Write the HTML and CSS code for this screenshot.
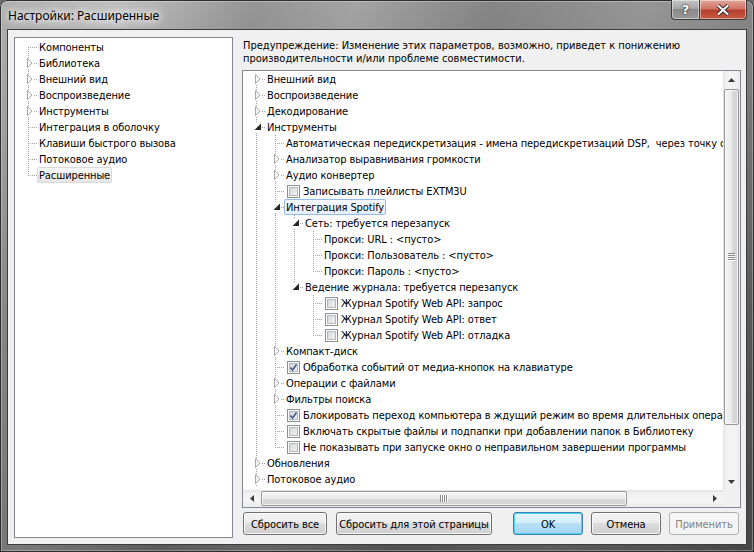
FILE: index.html
```html
<!DOCTYPE html>
<html>
<head>
    <title>Настройки: Расширенные</title>
    <meta charset="UTF-8">
    <link rel="stylesheet" href="styles.css">
</head>
<body>
<svg class="sprite" width="0" height="0">
    <symbol id="tri-c" viewBox="0 0 19 16">
        <rect x="8" y="3" width="8" height="11" fill="#fff"/>
        <path d="M9.5 3.5 L14 8 L9.5 12.5 Z" fill="#fff" stroke="#a6a6a6"/>
    </symbol>
    <symbol id="tri-e" viewBox="0 0 19 16">
        <rect x="8" y="3" width="8" height="10" fill="#fff"/>
        <path d="M15 4.5 V11 H8.5 Z" fill="#262626"/>
    </symbol>
    <symbol id="tick" viewBox="0 0 11 11">
        <path d="M2.5 5.5 L4.5 8 L8.5 2.5" fill="none" stroke="#4a6093" stroke-width="1.7"/>
    </symbol>
</svg>

<div class="window">
    <div class="titlebar">
        <span class="title">Настройки: Расширенные</span>
        <div class="caption">
            <div class="cap help">?</div>
            <div class="cap close">
                <svg width="16" height="12" viewBox="0 0 16 12">
                    <path d="M3 1.5 L13 10.5 M13 1.5 L3 10.5" stroke="#3a2a2a" stroke-width="4"/>
                    <path d="M3 1.5 L13 10.5 M13 1.5 L3 10.5" stroke="#fff" stroke-width="2"/>
                </svg>
            </div>
        </div>
    </div>

    <div class="client">
        <!-- page list -->
        <div class="nav tree">
            <div class="row"><span class="c first"></span><span class="lbl">Компоненты</span></div>
            <div class="row"><span class="c mid"><svg class="ico"><use href="#tri-c"/></svg></span><span class="lbl">Библиотека</span></div>
            <div class="row"><span class="c mid"><svg class="ico"><use href="#tri-c"/></svg></span><span class="lbl">Внешний вид</span></div>
            <div class="row"><span class="c mid"><svg class="ico"><use href="#tri-c"/></svg></span><span class="lbl">Воспроизведение</span></div>
            <div class="row"><span class="c mid"><svg class="ico"><use href="#tri-c"/></svg></span><span class="lbl">Инструменты</span></div>
            <div class="row"><span class="c mid"></span><span class="lbl">Интеграция в оболочку</span></div>
            <div class="row"><span class="c mid"></span><span class="lbl">Клавиши быстрого вызова</span></div>
            <div class="row"><span class="c mid"></span><span class="lbl">Потоковое аудио</span></div>
            <div class="row"><span class="c last"></span><span class="lbl sel-gray">Расширенные</span></div>
        </div>

        <div class="page">
            <p class="warn">Предупреждение: Изменение этих параметров, возможно, приведет к понижению<br>производительности и/или проблеме совместимости.</p>

            <div class="adv">
                <div class="viewport tree">
                    <div class="row"><span class="c first"><svg class="ico"><use href="#tri-c"/></svg></span><span class="lbl">Внешний вид</span></div>
                    <div class="row"><span class="c mid"><svg class="ico"><use href="#tri-c"/></svg></span><span class="lbl">Воспроизведение</span></div>
                    <div class="row"><span class="c mid"><svg class="ico"><use href="#tri-c"/></svg></span><span class="lbl">Декодирование</span></div>
                    <div class="row"><span class="c mid"><svg class="ico"><use href="#tri-e"/></svg></span><span class="lbl">Инструменты</span></div>

                    <div class="row"><span class="g v"></span><span class="c mid"></span><span class="lbl">Автоматическая передискретизация - имена передискретизаций DSP,&nbsp; через точку с запятой</span></div>
                    <div class="row"><span class="g v"></span><span class="c mid"><svg class="ico"><use href="#tri-c"/></svg></span><span class="lbl">Анализатор выравнивания громкости</span></div>
                    <div class="row"><span class="g v"></span><span class="c mid"><svg class="ico"><use href="#tri-c"/></svg></span><span class="lbl">Аудио конвертер</span></div>
                    <div class="row"><span class="g v"></span><span class="c mid"></span><span class="cb"></span><span class="lbl">Записывать плейлисты EXTM3U</span></div>
                    <div class="row"><span class="g v"></span><span class="c mid"><svg class="ico"><use href="#tri-e"/></svg></span><span class="lbl sel">Интеграция Spotify</span></div>

                    <div class="row"><span class="g v"></span><span class="g v"></span><span class="c mid"><svg class="ico"><use href="#tri-e"/></svg></span><span class="lbl">Сеть: требуется перезапуск</span></div>
                    <div class="row"><span class="g v"></span><span class="g v"></span><span class="g v"></span><span class="c mid"></span><span class="lbl">Прокси: URL : &lt;пусто&gt;</span></div>
                    <div class="row"><span class="g v"></span><span class="g v"></span><span class="g v"></span><span class="c mid"></span><span class="lbl">Прокси: Пользователь : &lt;пусто&gt;</span></div>
                    <div class="row"><span class="g v"></span><span class="g v"></span><span class="g v"></span><span class="c last"></span><span class="lbl">Прокси: Пароль : &lt;пусто&gt;</span></div>
                    <div class="row"><span class="g v"></span><span class="g v"></span><span class="c last"><svg class="ico"><use href="#tri-e"/></svg></span><span class="lbl">Ведение журнала: требуется перезапуск</span></div>
                    <div class="row"><span class="g v"></span><span class="g v"></span><span class="g"></span><span class="c mid"></span><span class="cb"></span><span class="lbl">Журнал Spotify Web API: запрос</span></div>
                    <div class="row"><span class="g v"></span><span class="g v"></span><span class="g"></span><span class="c mid"></span><span class="cb"></span><span class="lbl">Журнал Spotify Web API: ответ</span></div>
                    <div class="row"><span class="g v"></span><span class="g v"></span><span class="g"></span><span class="c last"></span><span class="cb"></span><span class="lbl">Журнал Spotify Web API: отладка</span></div>

                    <div class="row"><span class="g v"></span><span class="c mid"><svg class="ico"><use href="#tri-c"/></svg></span><span class="lbl">Компакт-диск</span></div>
                    <div class="row"><span class="g v"></span><span class="c mid"></span><span class="cb"><svg class="tick"><use href="#tick"/></svg></span><span class="lbl">Обработка событий от медиа-кнопок на клавиатуре</span></div>
                    <div class="row"><span class="g v"></span><span class="c mid"><svg class="ico"><use href="#tri-c"/></svg></span><span class="lbl">Операции с файлами</span></div>
                    <div class="row"><span class="g v"></span><span class="c mid"><svg class="ico"><use href="#tri-c"/></svg></span><span class="lbl">Фильтры поиска</span></div>
                    <div class="row"><span class="g v"></span><span class="c mid"></span><span class="cb"><svg class="tick"><use href="#tick"/></svg></span><span class="lbl">Блокировать переход компьютера в ждущий режим во время длительных операций</span></div>
                    <div class="row"><span class="g v"></span><span class="c mid"></span><span class="cb"></span><span class="lbl">Включать скрытые файлы и подпапки при добавлении папок в Библиотеку</span></div>
                    <div class="row"><span class="g v"></span><span class="c last"></span><span class="cb"></span><span class="lbl">Не показывать при запуске окно о неправильном завершении программы</span></div>

                    <div class="row"><span class="c mid"><svg class="ico"><use href="#tri-c"/></svg></span><span class="lbl">Обновления</span></div>
                    <div class="row"><span class="c mid"><svg class="ico"><use href="#tri-c"/></svg></span><span class="lbl">Потоковое аудио</span></div>
                </div>

                <div class="vscroll">
                    <div class="sb-btn"><svg width="7" height="4"><path d="M3.5 0 L7 4 H0 Z" fill="#3c3c3c"/></svg></div>
                    <div class="thumb v-thumb">
                        <svg width="8" height="8"><path d="M0 1.5h7M0 3.5h7M0 5.5h7M0 7.5h7" stroke="#fff"/><path d="M0 0.5h7M0 2.5h7M0 4.5h7M0 6.5h7" stroke="#8a8a8a"/></svg>
                    </div>
                    <div class="track"></div>
                    <div class="sb-btn"><svg width="7" height="4"><path d="M0 0 H7 L3.5 4 Z" fill="#3c3c3c"/></svg></div>
                </div>
                <div class="hscroll">
                    <div class="sb-btn"><svg width="4" height="7"><path d="M4 0 V7 L0 3.5 Z" fill="#3c3c3c"/></svg></div>
                    <div class="thumb h-thumb">
                        <svg width="8" height="8"><path d="M1.5 0v7M3.5 0v7M5.5 0v7M7.5 0v7" stroke="#fff"/><path d="M0.5 0v7M2.5 0v7M4.5 0v7M6.5 0v7" stroke="#8a8a8a"/></svg>
                    </div>
                    <div class="track"></div>
                    <div class="sb-btn"><svg width="4" height="7"><path d="M0 0 L4 3.5 L0 7 Z" fill="#3c3c3c"/></svg></div>
                </div>
                <div class="corner"></div>
            </div>

            <div class="buttons">
                <div class="btn reset-all">Сбросить все</div>
                <div class="btn reset-page">Сбросить для этой страницы</div>
                <div class="btn ok">OK</div>
                <div class="btn">Отмена</div>
                <div class="btn disabled">Применить</div>
            </div>
        </div>
    </div>
</div>
</body>
</html>
```

FILE: styles.css
```css
body {
    margin: 0;
    background: #6b6b6b;
    font-family: "DejaVu Sans Condensed", "Liberation Sans", sans-serif;
    font-size: 11px;
    color: #000;
    overflow: hidden;
}

.sprite {
    display: block;
    width: 0;
    height: 0;
}

/* window frame */
.window {
    width: 754px;
    height: 552px;
    box-sizing: border-box;
    padding: 0 7px 7px;
    display: flex;
    flex-direction: column;
    border-radius: 7px 7px 0 0;
    background:
        linear-gradient(to bottom, rgba(255, 255, 255, 0.08), rgba(0, 0, 0, 0.25) 60%, rgba(0, 0, 0, 0.35)),
        linear-gradient(100deg, #a9a9a9 0%, #b9b9b9 14%, #8c8c8c 30%, #9c9c9c 42%, #7b7b7b 58%, #8e8e8e 76%, #6c6c6c 100%);
    box-shadow: inset 0 0 0 1px #2e2e2e, inset 0 0 0 2px rgba(255, 255, 255, 0.3);
}

.titlebar {
    height: 29px;
    display: flex;
    justify-content: space-between;
    align-items: flex-start;
}

.title {
    font-family: "Noto Sans", "Open Sans", sans-serif;
    font-size: 12px;
    padding: 7px 0 0 1px;
    color: #000;
    text-shadow: 0 0 6px #fff, 0 0 10px #fff, 0 0 16px rgba(255, 255, 255, 0.9);
}

.caption {
    display: flex;
}

.cap {
    height: 19px;
    display: flex;
    align-items: center;
    justify-content: center;
    border: 1px solid #3a3a3a;
    border-top: none;
    box-shadow: inset 0 0 0 1px rgba(255, 255, 255, 0.45);
}

.help {
    width: 27px;
    border-radius: 0 0 0 4px;
    background: linear-gradient(#c4c4c4, #a2a2a2 50%, #8a8a8a 50%, #9a9a9a);
    color: #fff;
    font-family: "DejaVu Sans", sans-serif;
    font-weight: bold;
    font-size: 13px;
    text-shadow: 0 0 1px #222, 0 0 2px #222;
}

.close {
    width: 46px;
    border-left: none;
    border-radius: 0 0 4px 0;
    background: linear-gradient(#e2a79c, #d07566 45%, #b8402f 55%, #c65a45);
}

.client {
    flex: 1;
    display: flex;
    gap: 9px;
    padding: 7px 5px 6px 6px;
    background: #f0f0f0;
    border: 1px solid #3c3c3c;
    min-height: 0;
}

/* trees */
.tree {
    background: #fff;
    letter-spacing: -0.1px;
}

.nav {
    width: 219px;
    box-sizing: border-box;
    border: 1px solid #828790;
    padding: 1px 0 0 3px;
}

.row {
    display: flex;
    align-items: center;
    height: 16px;
    white-space: nowrap;
}

.g,
.c {
    flex: none;
    width: 19px;
    height: 16px;
    background-repeat: no-repeat;
}

.g.v {
    background-image: repeating-linear-gradient(to bottom, #a0a0a0 0 1px, transparent 1px 2px);
    background-size: 1px 16px;
    background-position: 10px 0;
}

.c.mid,
.c.last,
.c.first {
    background-image:
        repeating-linear-gradient(to bottom, #a0a0a0 0 1px, transparent 1px 2px),
        repeating-linear-gradient(to right, #a0a0a0 0 1px, transparent 1px 2px);
    background-size: 1px 16px, 9px 1px;
    background-position: 10px 0, 10px 8px;
}

.c.last {
    background-size: 1px 9px, 9px 1px;
}

.c.first {
    background-size: 1px 8px, 9px 1px;
    background-position: 10px 8px, 10px 8px;
}

.ico {
    display: block;
    width: 19px;
    height: 16px;
}

.lbl {
    flex: none;
    height: 16px;
    box-sizing: border-box;
    line-height: 13px;
    padding: 1px 1px 0;
    border: 1px solid transparent;
    border-radius: 2px;
}

.lbl.sel {
    border-color: #92bbe8;
    background: linear-gradient(#f5faff, #e3eefb);
}

.lbl.sel-gray {
    border-color: #d9d9d9;
    background: linear-gradient(#f8f8f8, #e6e6e6);
}

.cb {
    flex: none;
    width: 13px;
    height: 13px;
    box-sizing: border-box;
    margin: 0 1px 0 3px;
    border: 1px solid #8e8f8f;
    background: linear-gradient(135deg, #cdd1d6, #f7f7f7);
    box-shadow: inset 0 0 0 1px #fff, inset 0 0 0 2px #b5b9be;
}

.tick {
    display: block;
    width: 11px;
    height: 11px;
}

/* right page */
.page {
    flex: 1;
    display: flex;
    flex-direction: column;
    min-width: 0;
}

.warn {
    margin: 1px 0 6px 1px;
    padding-top: 1px;
    height: 25px;
    line-height: 13px;
}

.adv {
    flex: 1;
    min-height: 0;
    display: grid;
    grid-template-columns: 1fr 17px;
    grid-template-rows: 1fr 17px;
    border: 1px solid #828790;
    background: #fff;
}

.viewport {
    overflow: hidden;
    padding-left: 3px;
}

/* scrollbars */
.vscroll,
.hscroll {
    display: flex;
    background: linear-gradient(to right, #e2e2e2, #f1f1f1 3px, #f4f4f4 60%, #ececec);
}

.vscroll {
    flex-direction: column;
}

.hscroll {
    background: linear-gradient(to bottom, #e2e2e2, #f1f1f1 3px, #f4f4f4 60%, #ececec);
}

.sb-btn {
    flex: none;
    width: 17px;
    height: 17px;
    display: flex;
    align-items: center;
    justify-content: center;
}

.track {
    flex: 1;
}

.thumb {
    flex: none;
    box-sizing: border-box;
    display: flex;
    align-items: center;
    justify-content: center;
    border: 1px solid #979797;
    border-radius: 2px;
}

.v-thumb {
    height: 336px;
    margin: 1px 1px 0;
    background: linear-gradient(to right, #f4f4f4, #e9e9e9 50%, #dadada 50%, #d2d2d2);
    box-shadow: inset 0 0 0 1px rgba(255, 255, 255, 0.7);
}

.h-thumb {
    width: 366px;
    margin: 1px 0 1px 1px;
    background: linear-gradient(to bottom, #f4f4f4, #e9e9e9 50%, #dadada 50%, #d2d2d2);
    box-shadow: inset 0 0 0 1px rgba(255, 255, 255, 0.7);
}

.corner {
    background: #f0f0f0;
}

/* buttons */
.buttons {
    display: flex;
    gap: 8px;
    margin: 4px 2px 3px 1px;
    letter-spacing: -0.1px;
}

.btn {
    flex: none;
    width: 70px;
    height: 23px;
    box-sizing: border-box;
    display: flex;
    align-items: center;
    justify-content: center;
    padding-top: 1px;
    border: 1px solid #707070;
    border-radius: 3px;
    background: linear-gradient(#f2f2f2, #ebebeb 50%, #dddddd 50%, #cfcfcf);
    box-shadow: inset 0 0 0 1px rgba(255, 255, 255, 0.8);
    white-space: nowrap;
}

.btn.reset-all {
    width: 84px;
}

.btn.reset-page {
    width: 156px;
    margin-left: 1px;
}

.btn.ok {
    margin-left: auto;
    border-color: #3c7fb1;
    background: linear-gradient(#e5f4fc, #d3edfb 50%, #b7dff6 50%, #a6d5f1);
    box-shadow: inset 0 0 0 1px #48d3f9;
}

.btn.disabled {
    border-color: #adb2b5;
    background: #f4f4f4;
    color: #838383;
    box-shadow: none;
}
```
